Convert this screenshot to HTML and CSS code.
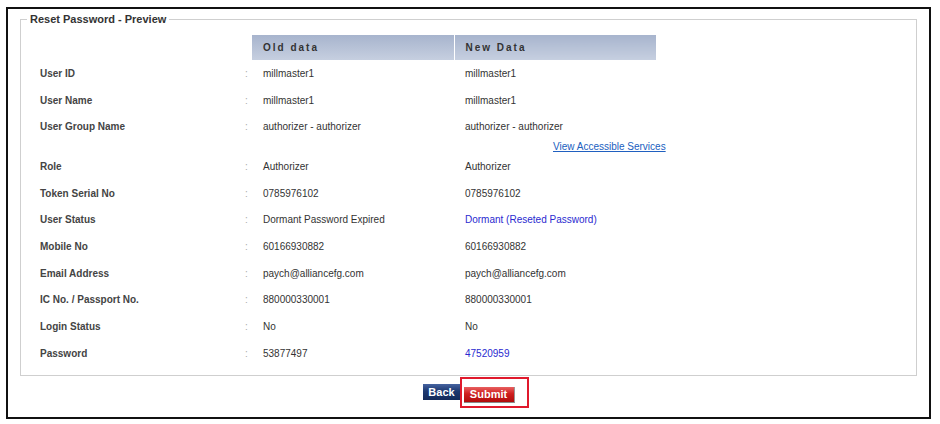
FILE: index.html
```html
<!DOCTYPE html>
<html lang="en">
<head>
    <meta charset="UTF-8">
    <title>Reset Password - Preview</title>
    <link rel="stylesheet" href="styles.css">
</head>
<body>
    <div class="frame">
        <fieldset class="preview">
            <legend>Reset Password - Preview</legend>
            <table class="data">
                <colgroup>
                    <col class="col-label">
                    <col class="col-colon">
                    <col class="col-old">
                    <col class="col-new">
                </colgroup>
                <tr class="head-row">
                    <td></td>
                    <td></td>
                    <th class="head head-old">Old data</th>
                    <th class="head">New Data</th>
                </tr>
                <tr>
                    <td class="label">User ID</td>
                    <td class="colon">:</td>
                    <td class="value">millmaster1</td>
                    <td class="value">millmaster1</td>
                </tr>
                <tr>
                    <td class="label">User Name</td>
                    <td class="colon">:</td>
                    <td class="value">millmaster1</td>
                    <td class="value">millmaster1</td>
                </tr>
                <tr>
                    <td class="label">User Group Name</td>
                    <td class="colon">:</td>
                    <td class="value">authorizer - authorizer</td>
                    <td class="value">authorizer - authorizer</td>
                </tr>
                <tr class="link-row">
                    <td></td>
                    <td></td>
                    <td></td>
                    <td class="link-cell"><a href="#">View Accessible Services</a></td>
                </tr>
                <tr>
                    <td class="label">Role</td>
                    <td class="colon">:</td>
                    <td class="value">Authorizer</td>
                    <td class="value">Authorizer</td>
                </tr>
                <tr>
                    <td class="label">Token Serial No</td>
                    <td class="colon">:</td>
                    <td class="value">0785976102</td>
                    <td class="value">0785976102</td>
                </tr>
                <tr>
                    <td class="label">User Status</td>
                    <td class="colon">:</td>
                    <td class="value">Dormant Password Expired</td>
                    <td class="value changed">Dormant (Reseted Password)</td>
                </tr>
                <tr>
                    <td class="label">Mobile No</td>
                    <td class="colon">:</td>
                    <td class="value">60166930882</td>
                    <td class="value">60166930882</td>
                </tr>
                <tr>
                    <td class="label">Email Address</td>
                    <td class="colon">:</td>
                    <td class="value">paych@alliancefg.com</td>
                    <td class="value">paych@alliancefg.com</td>
                </tr>
                <tr>
                    <td class="label">IC No. / Passport No.</td>
                    <td class="colon">:</td>
                    <td class="value">880000330001</td>
                    <td class="value">880000330001</td>
                </tr>
                <tr>
                    <td class="label">Login Status</td>
                    <td class="colon">:</td>
                    <td class="value">No</td>
                    <td class="value">No</td>
                </tr>
                <tr>
                    <td class="label">Password</td>
                    <td class="colon">:</td>
                    <td class="value">53877497</td>
                    <td class="value changed">47520959</td>
                </tr>
            </table>
        </fieldset>

        <div class="actions">
            <button type="button" class="btn btn-back">Back</button>
            <span class="submit-wrap">
                <button type="submit" class="btn btn-submit">Submit</button>
                <span class="highlight"></span>
            </span>
        </div>
    </div>
</body>
</html>
```

FILE: styles.css
```css
* {
    margin: 0;
    padding: 0;
    box-sizing: border-box;
}

body {
    font-family: 'Liberation Sans', Arial, Helvetica, sans-serif;
    background: #fff;
    color: #333;
}

.frame {
    margin: 7px 0 0 6px;
    width: 925px;
    height: 412px;
    border: 2px solid #111;
    padding: 4px 12px 0 12px;
}

.preview {
    border: 1px solid #cfcfcf;
    padding: 9px 0 8px 6px;
    min-width: 0;
}

.preview legend {
    font-size: 11px;
    line-height: 13px;
    font-weight: bold;
    color: #333;
    padding: 0 3px;
}

.data {
    border-collapse: collapse;
    table-layout: fixed;
    width: 629px;
    font-size: 10px;
}

.col-label { width: 216px; }
.col-colon { width: 9px; }
.col-old { width: 202px; }
.col-new { width: 202px; }

.data td,
.data th {
    height: 26.7px;
    padding: 0;
    vertical-align: middle;
    white-space: nowrap;
    text-align: left;
}

.head-row td,
.head-row th {
    height: 25px;
}

.head {
    background: linear-gradient(to bottom, #a7b4cd 0%, #c6cfe0 100%);
    color: #333;
    font-weight: bold;
    letter-spacing: 2px;
    padding-left: 11px !important;
}

.head-old {
    border-right: 1px solid #fff;
}

.label {
    padding-left: 13px !important;
    font-weight: bold;
    color: #444;
}

.colon {
    color: #aaa;
    padding-left: 2px !important;
}

.value {
    padding-left: 11px !important;
    color: #333;
}

.value.changed {
    color: #2a2ad0;
}

.link-row td {
    height: 13px;
}

.link-cell {
    padding-left: 99px !important;
    overflow: visible;
}

.link-cell a {
    color: #2060c0;
    text-decoration: underline;
}

.actions {
    display: flex;
    justify-content: center;
    align-items: center;
    gap: 3px;
    margin-top: 8px;
}

.btn {
    font-family: 'Liberation Sans', Arial, sans-serif;
    font-size: 11px;
    font-weight: bold;
    color: #fff;
    height: 16px;
    line-height: 16px;
    border: none;
    cursor: pointer;
}

.btn-back {
    width: 38px;
    background: linear-gradient(to bottom, #4563a0 0%, #1d3870 45%, #132a5a 100%);
}

.btn-submit {
    width: 51px;
    background: linear-gradient(to bottom, #e86060 0%, #cf1f1f 45%, #b00c0c 100%);
    border-bottom: 1px solid #8a8a8a;
    border-right: 1px solid #999;
    line-height: 15px;
}

.submit-wrap {
    position: relative;
    display: inline-block;
    height: 16px;
}

.highlight {
    position: absolute;
    left: -4px;
    top: -7px;
    width: 69px;
    height: 31px;
    border: 2px solid #e0192c;
}
```
